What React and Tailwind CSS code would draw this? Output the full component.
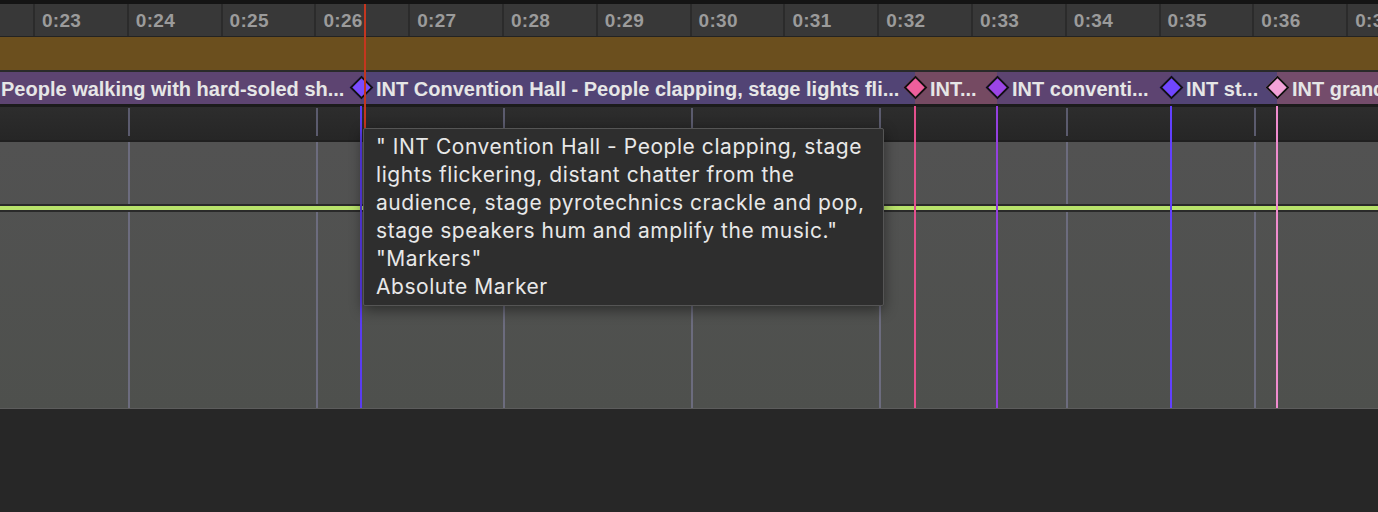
const labels = ['0:22','0:23','0:24','0:25','0:26','0:27','0:28','0:29','0:30','0:31','0:32','0:33','0:34','0:35','0:36','0:37'];
const gridCells = [0, 1, 2, 3, 4, 5, 6, 7];

const segments = [
  { w: 361, bg: 'bg-[#5d4471]', diamond: null, text: 'People walking with hard-soled sh...' },
  { w: 554, bg: 'bg-[#524475]', diamond: 'bg-[#7a4cff]', text: 'INT Convention Hall - People clapping, stage lights fli...' },
  { w: 82, bg: 'bg-[#754a62]', diamond: 'bg-[#ee5f9c]', text: 'INT...' },
  { w: 174, bg: 'bg-[#5d4471]', diamond: 'bg-[#9b45e6]', text: 'INT conventi...' },
  { w: 106, bg: 'bg-[#524475]', diamond: 'bg-[#7046ff]', text: 'INT st...' },
  { w: 200, bg: 'bg-[#744c6b]', diamond: 'bg-[#f3a2d8]', text: 'INT grand central station' },
];

const markerLines = [
  { x: 360, c: 'bg-[#5a3cf2]' },
  { x: 914, c: 'bg-[#e4508e]' },
  { x: 996, c: 'bg-[#9440e0]' },
  { x: 1170, c: 'bg-[#6240ff]' },
  { x: 1276, c: 'bg-[#f08ccf]' },
];

function GridRow({ color }) {
  return (
    <div className="flex h-full ml-[-57.4px]">
      {gridCells.map((i) => (
        <div key={i} className={`w-[187.6px] shrink-0 h-full border-r-2 ${color}`} />
      ))}
    </div>
  );
}

export default function App() {
  return (
    <div className="relative w-[1378px] h-[512px] overflow-hidden bg-[#272727] font-['Liberation_Sans',Arial,sans-serif]">
      <div className="h-[4px] bg-[#141414]" />
      {/* ruler */}
      <div className="h-[33px] bg-[#383838] border-b border-[#232323] overflow-hidden">
        <div className="flex h-full ml-[-58.8px]">
          {labels.map((l) => (
            <div
              key={l}
              className="w-[93.8px] shrink-0 h-full border-r-2 border-[#2b2b2b] pl-[7px] pt-[2px] flex items-center text-[19px] font-bold tracking-[0.3px] text-[#9b9b9b]"
            >
              {l}
            </div>
          ))}
        </div>
      </div>
      {/* brown track */}
      <div className="h-[35px] bg-[#6b4f1e] border-b-2 border-[#2a2a2a]" />
      {/* marker bar */}
      <div className="h-[32px] flex whitespace-nowrap">
        {segments.map((s, i) => (
          <div key={i} className={`relative shrink-0 h-full ${s.bg} flex items-center pt-[1px]`} style={{ width: s.w }}>
            {s.diamond && (
              <div className={`absolute left-[-8.5px] top-[7px] w-[17px] h-[17px] rotate-45 border-2 border-[#111] ${s.diamond}`} />
            )}
            <span className={`text-[20px] font-bold text-[#e6e6e6] ${i === 0 ? 'pl-[1px]' : 'pl-[15px]'}`}>{s.text}</span>
          </div>
        ))}
      </div>
      <div className="h-[3px] bg-[#1b1b1b]" />
      {/* tick strip */}
      <div className="h-[35px] bg-gradient-to-b from-[#2d2d2d] to-[#262626] border-b-2 border-[#202020] pt-[1px] pb-[4px] overflow-hidden">
        <GridRow color="border-[#5b5b6e]" />
      </div>
      {/* lane */}
      <div className="relative h-[267px] bg-gradient-to-b from-[#525252] to-[#4e504d] border-b border-[#5c5c5c] overflow-hidden">
        <div className="absolute inset-0">
          <GridRow color="border-[#6c6c7e]" />
        </div>
        <div className="relative flex flex-col">
          <div className="h-[62px]" />
          <div className="h-[8px] bg-[#b9e36b] border-y-2 border-[#2a2a2a]" />
        </div>
      </div>
      {/* marker lines */}
      {markerLines.map((m) => (
        <div key={m.x} className={`absolute top-[106px] h-[302px] w-[2px] ${m.c}`} style={{ left: m.x }} />
      ))}
      {/* playhead */}
      <div className="absolute left-[364px] top-[4px] h-[126px] w-[2px] bg-[#c4361f]" />
      {/* tooltip */}
      <div className="absolute left-[363px] top-[128px] w-[521px] h-[178px] bg-[#2e2e2e] border border-[#555555] rounded-[2px] shadow-[0_4px_14px_rgba(0,0,0,0.45)] pl-[12px] pt-[4px] font-['Inter',sans-serif] text-[21px] tracking-[0.55px] leading-[28px] text-[#e8e8e8] whitespace-nowrap">
        <div>" INT Convention Hall - People clapping, stage</div>
        <div>lights flickering, distant chatter from the</div>
        <div>audience, stage pyrotechnics crackle and pop,</div>
        <div>stage speakers hum and amplify the music."</div>
        <div>"Markers"</div>
        <div>Absolute Marker</div>
      </div>
    </div>
  );
}
